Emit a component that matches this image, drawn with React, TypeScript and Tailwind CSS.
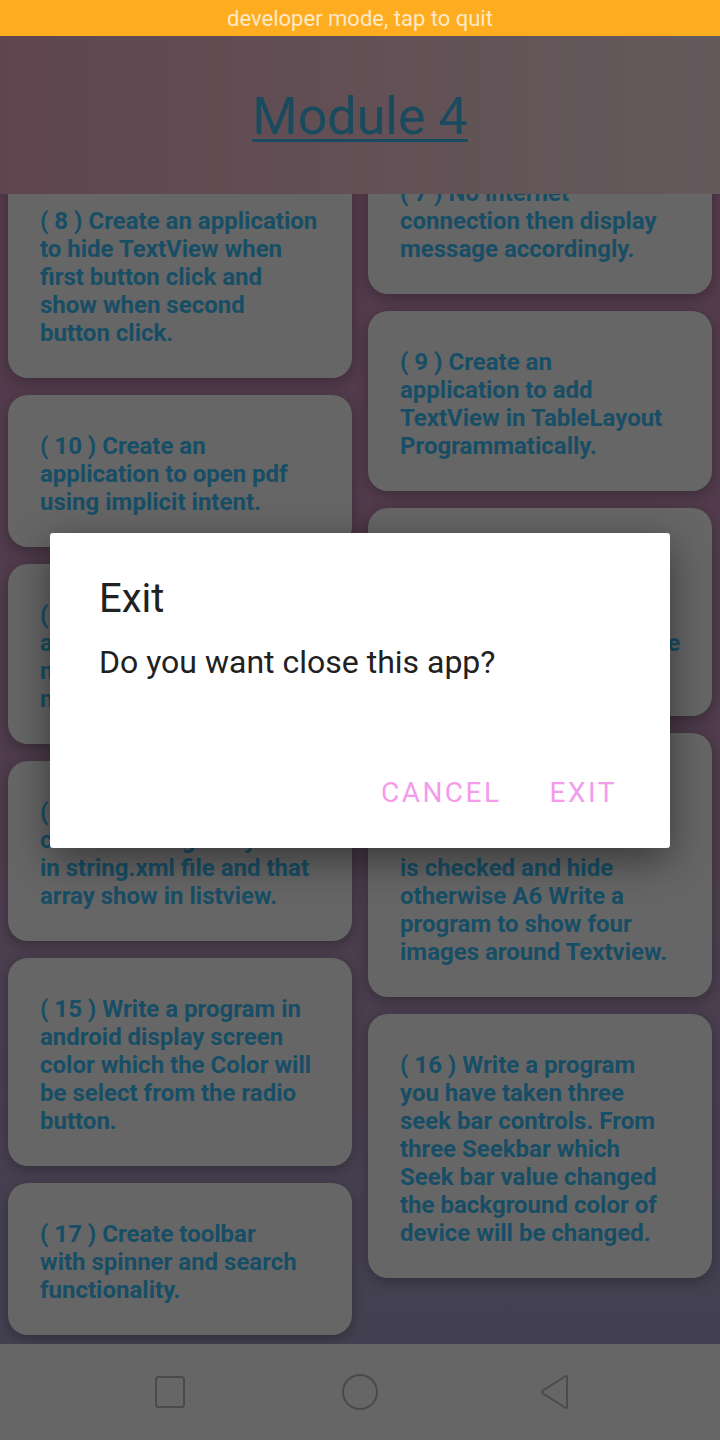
import React from "react";

type Card = { lines: string[] };

const leftCards: Card[] = [
    { lines: ["( 8 ) Create an application", "to hide TextView when", "first button click and", "show when second", "button click."] },
    { lines: ["( 10 ) Create an", "application to open pdf", "using implicit intent."] },
    { lines: ["( 12 ) Create an", "application to show", "notification with", "notification action."] },
    { lines: ["( 14 ) Create an", "create a string array", "in string.xml file and that", "array show in listview."] },
    { lines: ["( 15 ) Write a program in", "android display screen", "color which the Color will", "be select from the radio", "button."] },
    { lines: ["( 17 ) Create toolbar", "with spinner and search", "functionality."] },
];

const rightCards: Card[] = [
    { lines: ["( 7 ) No internet", "connection then display", "message accordingly."] },
    { lines: ["( 9 ) Create an", "application to add", "TextView in TableLayout", "Programmatically."] },
    { lines: ["( 11 ) Create an", "application to display", "a custom Toast", "with images and message", "on screen."] },
    { lines: ["( 13 ) Write a program", "to show TextView when", "the CheckBox", "is checked and hide", "otherwise A6 Write a", "program to show four", "images around Textview."] },
    { lines: ["( 16 ) Write a program", "you have taken three", "seek bar controls. From", "three Seekbar which", "Seek bar value changed", "the background color of", "device will be changed."] },
];

function ProgramCard({ card }: { card: Card }) {
    return (
        <div className="rounded-[20px] bg-white px-[32px] pt-[37px] pb-[31px] shadow-[0_4px_14px_rgba(0,0,0,0.28)]">
            <p className="text-[24px] leading-[28px] font-bold text-[#3ec4fc]">
                {card.lines.map((line, i) => (
                    <span key={i} className="block whitespace-nowrap">{line}</span>
                ))}
            </p>
        </div>
    );
}

function NavBar() {
    return (
        <div className="h-[96px] bg-white flex items-center justify-center pl-[4px]">
            <div className="w-[80px] flex justify-center">
                <svg width="32" height="34" viewBox="0 0 32 34" fill="none">
                    <rect x="2" y="2" width="28" height="30" rx="2.5" stroke="#b9b9b9" strokeWidth="2" />
                </svg>
            </div>
            <div className="w-[80px] ml-[110px] flex justify-center">
                <svg width="38" height="38" viewBox="0 0 38 38" fill="none">
                    <circle cx="19" cy="19" r="17" stroke="#b9b9b9" strokeWidth="2" />
                </svg>
            </div>
            <div className="w-[80px] ml-[114px] flex justify-center">
                <svg width="32" height="38" viewBox="0 0 32 38" fill="none">
                    <path d="M27 3.5 Q29 2 29 5 L29 33 Q29 36 27 34.5 L5 20.5 Q3 19 5 17.5 Z" stroke="#b9b9b9" strokeWidth="2" strokeLinejoin="round" />
                </svg>
            </div>
        </div>
    );
}

function ExitDialog() {
    return (
        <div className="w-[620px] bg-white rounded-[3px] shadow-[0_12px_40px_rgba(0,0,0,0.45)] pt-[42px] pb-[19px]">
            <h2 className="px-[49px] text-[40px] leading-[48px] text-[#212121]">Exit</h2>
            <p className="mt-[17px] px-[49px] text-[32px] leading-[44px] text-[#212121]">Do you want close this app?</p>
            <div className="mt-[73px] flex justify-end gap-[16px] pr-[37px]">
                <button className="h-[72px] px-[16px] text-[28px] tracking-[2.5px] text-[#f49bea]">CANCEL</button>
                <button className="h-[72px] px-[16px] text-[28px] tracking-[2.5px] text-[#f49bea]">EXIT</button>
            </div>
        </div>
    );
}

export default function App() {
    return (
        <div className="w-[720px] h-[1440px] flex flex-col overflow-hidden font-['Roboto','Liberation_Sans',sans-serif]">
            {/* developer bar */}
            <div className="h-[36px] bg-[#ffad20] flex items-center justify-center text-[22px] text-[#fde9c9]">
                developer mode, tap to quit
            </div>

            <div className="relative flex-1 flex flex-col">
                <div className="flex-1 flex flex-col bg-linear-to-b from-[#d493bc] via-[#c896bf] to-[#a7a2cb]">
                    <div className="h-[158px] pt-[4px] flex items-center justify-center bg-linear-to-r from-[#eeafc4] to-[#fae1e6] relative z-10">
                        <h1 className="text-[52px] leading-none text-[#41b9eb] underline decoration-[3px] underline-offset-[5px]">Module 4</h1>
                    </div>
                    <div className="h-[1150px] overflow-hidden grid grid-cols-2 gap-x-[16px] px-[8px] items-start">
                        <div className="min-w-0 flex flex-col gap-[17px] -mt-[24px]">
                            {leftCards.map((c, i) => <ProgramCard key={i} card={c} />)}
                        </div>
                        <div className="min-w-0 flex flex-col gap-[17px] -mt-[52px]">
                            {rightCards.map((c, i) => <ProgramCard key={i} card={c} />)}
                        </div>
                    </div>
                </div>
                <NavBar />

                {/* dim + dialog */}
                <div className="absolute inset-0 bg-black/60 z-20" />
                <div className="absolute inset-x-0 top-0 bottom-[96px] z-30 flex items-center justify-center">
                    <ExitDialog />
                </div>
            </div>
        </div>
    );
}
